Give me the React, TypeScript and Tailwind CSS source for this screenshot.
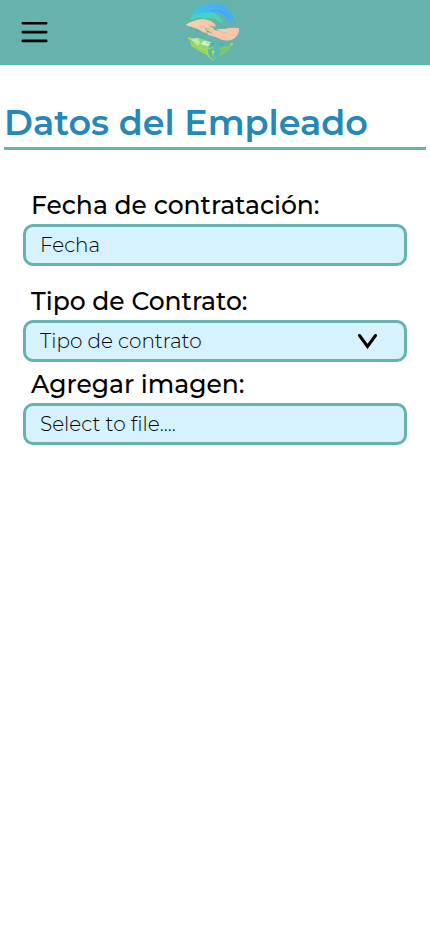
import React from "react";

const labelClass = "block pb-0.5 pl-2 text-[25px] leading-[34px] font-medium text-black";
const fieldClass =
  "block h-[42px] w-full rounded-[10px] border-3 border-[#66b2ac] bg-[#d5f2fe] px-3.5 text-xl font-light text-black";

function Logo() {
  return (
    <svg viewBox="15 0 210 195" className="h-[65px] w-[70px]" role="img" aria-label="Logo">
      <defs>
        <linearGradient id="topHand" x1="0" y1="0.6" x2="1" y2="0.3">
          <stop offset="0" stopColor="#3cc9d6" />
          <stop offset="0.45" stopColor="#46b6f2" />
          <stop offset="1" stopColor="#45a8f8" />
        </linearGradient>
        <linearGradient id="palm" x1="0" y1="0" x2="1" y2="0.5">
          <stop offset="0" stopColor="#3ad3d6" />
          <stop offset="1" stopColor="#48d8a8" />
        </linearGradient>
        <linearGradient id="skin" x1="0" y1="0" x2="1" y2="0.3">
          <stop offset="0" stopColor="#f8d2b4" />
          <stop offset="1" stopColor="#f8c3a6" />
        </linearGradient>
        <linearGradient id="shield" x1="0" y1="0" x2="1" y2="0">
          <stop offset="0" stopColor="#a6e062" />
          <stop offset="1" stopColor="#45b4dc" />
        </linearGradient>
      </defs>
      <path d="M48 50 L60 25 Q90 11 120 12 Q148 14 160 30 Q172 41 180 66 Q168 60 160 48 Q168 62 169 71 Q157 65 148 49 Q128 34 100 39 Q72 42 48 50Z" fill="url(#topHand)" />
      <path d="M48 50 Q70 38 96 38 Q120 36 132 49 Q139 58 143 69 Q130 67 120 56 Q104 52 91 57 Q68 46 46 62Z" fill="url(#palm)" />
      <path d="M104 34 Q126 26 143 37 Q158 44 165 58" fill="none" stroke="#3a9ae6" strokeWidth="2" />
      <path d="M126 43 Q140 49 153 68" fill="none" stroke="#62b8b0" strokeWidth="3" />
      <path d="M32 74 Q55 60 82 57 Q102 59 113 67 Q124 73 121 80 Q109 80 98 72 L119 88 Q113 92 105 86 L89 84 Q98 94 94 100 Q80 96 69 87 L47 80 Q40 78 32 74Z" fill="url(#skin)" />
      <path d="M192 84 Q166 82 149 87 L124 87 Q132 94 143 96 L101 86 Q96 84 94 89 L116 101 L98 97 Q93 99 100 104 L122 111 Q145 125 169 120 Q188 112 192 94Z" fill="url(#skin)" />
      <path d="M97 88 L124 99 M100 99 L122 106 M124 88 L146 99 L158 96" fill="none" stroke="#e6ab90" strokeWidth="1.5" />
      <path d="M43 116 L70 113 L108 127 L99 150 L74 144Z" fill="#8fd680" />
      <path d="M45 116 L70 115 L76 131 L67 137Z" fill="#bceaa0" />
      <path d="M76 131 L88 122 L108 127 L99 139Z" fill="#d8f4c8" />
      <path d="M43 120 L71 141 L96 149 L100 166 L78 156 L49 137Z" fill="#a7db52" />
      <path d="M46 128 L72 149 L96 157" fill="none" stroke="#7cca58" strokeWidth="2" />
      <path d="M131 145 L172 133 Q157 163 128 169Z" fill="#84c868" />
      <path d="M133 155 L166 137 M133 162 L157 149" stroke="#66b89a" strokeWidth="2" />
      <path d="M67 113 L92 109 L113 132 L139 133 L170 133 M92 128 L113 132 L119 118" fill="none" stroke="#52beac" strokeWidth="2" />
      <path d="M114 140 Q123 147 132 147 Q134 169 114 180 Q94 169 96 147 Q105 147 114 140Z" fill="#5cbca4" stroke="url(#shield)" strokeWidth="4" />
      <circle cx="114" cy="155" r="4" fill="#b4e05c" />
      <path d="M114 157 V166" stroke="#b4e05c" strokeWidth="3" />
      <g fill="#48b8aa">
        <circle cx="48" cy="84" r="4" /><circle cx="67" cy="92" r="5" />
        <circle cx="44" cy="100" r="2" /><circle cx="54" cy="103" r="2" />
        <circle cx="113" cy="133" r="5" /><circle cx="139" cy="133" r="5" />
        <circle cx="135" cy="72" r="2" /><circle cx="154" cy="82" r="3" />
        <circle cx="179" cy="71" r="3" /><circle cx="170" cy="80" r="2" />
        <circle cx="88" cy="105" r="2" /><circle cx="105" cy="119" r="2" />
      </g>
      <g fill="#a8dc5c">
        <circle cx="44" cy="115" r="4" /><circle cx="170" cy="133" r="4" />
        <circle cx="75" cy="132" r="4" />
      </g>
    </svg>
  );
}

export default function App() {
  return (
    <div className="min-h-screen bg-white font-['Montserrat','Inter',sans-serif]">
      <header className="grid grid-cols-[1fr_auto_1fr] items-center bg-[#66b2ac]">
        <button type="button" aria-label="Abrir menú" className="ml-4 flex size-9 items-center justify-center">
          <svg viewBox="0 0 28 24" className="h-6 w-7" stroke="#000" strokeWidth="2.6" strokeLinecap="round">
            <path d="M2.8 2.3H26.2M2.8 11.1H26.2M2.8 19.9H26.2" />
          </svg>
        </button>
        <Logo />
      </header>

      <main className="px-1 pt-9">
        <h1 className="border-b-3 border-[#66b2ac] pb-0.5 text-[35px] leading-11 font-semibold text-[#2588b8]">
          Datos del Empleado
        </h1>

        <form className="px-[19px] pt-[38px]">
          <div>
            <label htmlFor="fecha" className={labelClass}>Fecha de contratación:</label>
            <input id="fecha" type="text" placeholder="Fecha" className={`${fieldClass} placeholder:text-black placeholder:opacity-100`} />
          </div>

          <div className="mt-[18px]">
            <label htmlFor="tipo" className={labelClass}>Tipo de Contrato:</label>
            <div className="relative">
              <select id="tipo" defaultValue="" className={`${fieldClass} appearance-none`}>
                <option value="">Tipo de contrato</option>
              </select>
              <svg viewBox="0 0 20 16" className="pointer-events-none absolute top-[13px] right-[30px] h-4 w-5" fill="none" stroke="#000" strokeWidth="3" strokeLinecap="round">
                <path d="M2.5 2.5L10.5 13.5L18.5 2.5" />
              </svg>
            </div>
          </div>

          <div className="mt-[5px]">
            <label htmlFor="imagen" className={labelClass}>Agregar imagen:</label>
            <label className={`${fieldClass} relative cursor-pointer leading-9`}>
              Select to file....
              <input id="imagen" type="file" accept="image/*" className="sr-only" />
            </label>
          </div>
        </form>
      </main>
    </div>
  );
}
